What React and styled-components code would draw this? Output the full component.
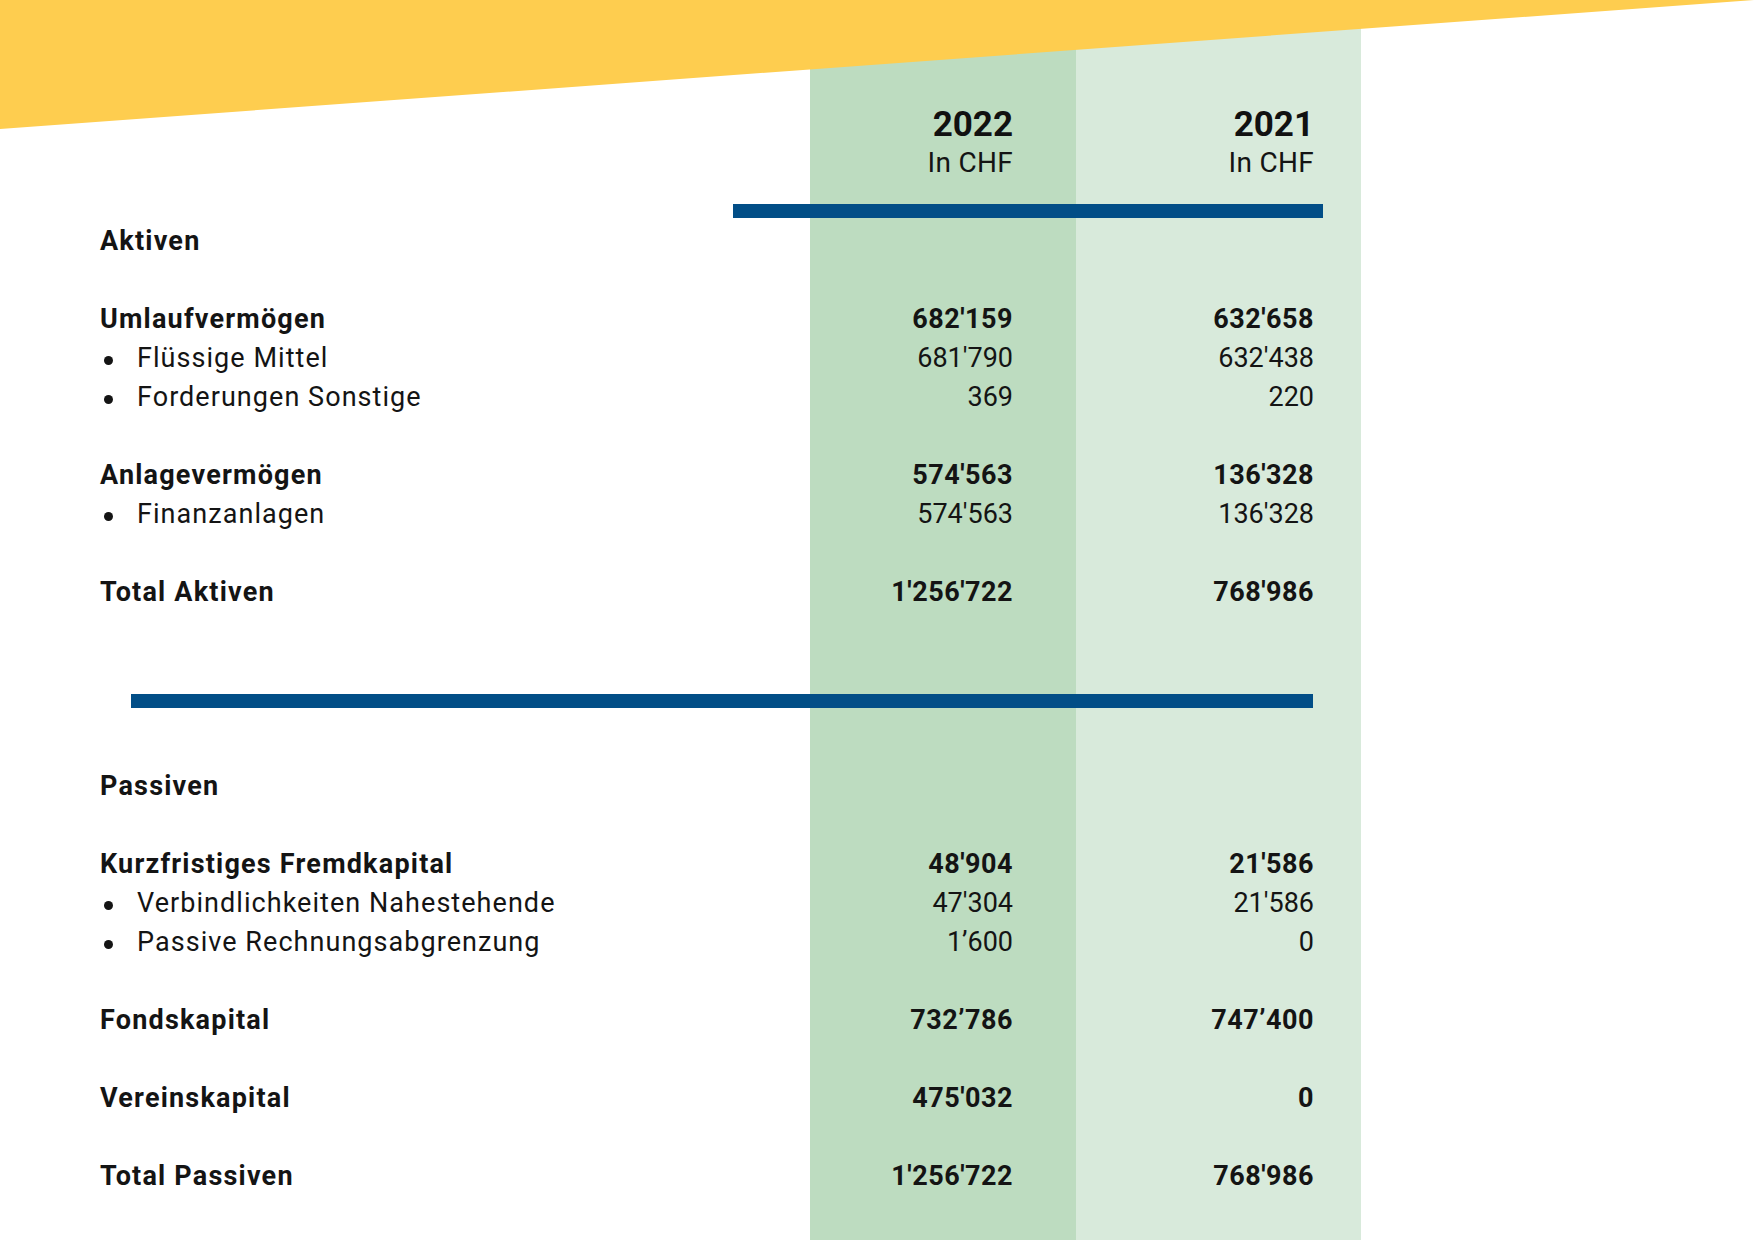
import styled, { createGlobalStyle } from 'styled-components';

const GlobalStyle = createGlobalStyle`
  html, body {
    margin: 0;
    padding: 0;
  }

  body {
    font-family: Roboto, "Liberation Sans", sans-serif;
    color: #141414;
    background: #fff;
  }
`;

const Page = styled.main`
  position: relative;
  width: 1754px;
  height: 1240px;
  overflow: hidden;
  background: linear-gradient(
    to right,
    #fff 0 810px,
    #bddcc0 810px 1076px,
    #d8eadb 1076px 1361px,
    #fff 1361px
  );
`;

const Banner = styled.div`
  position: absolute;
  top: 0;
  left: 0;
  width: 100%;
  height: 130px;
  background-color: #fecd4f;
  clip-path: polygon(0 0, 100% 0, 0 129px);
`;

const Sheet = styled.section`
  box-sizing: border-box;
  width: 1314px;
  padding: 105px 0 0 100px;
`;

const Grid = styled.div`
  display: grid;
  grid-template-columns: 1fr 200px 301px;
`;

const HeadCell = styled.div`
  text-align: right;
`;

const Year = styled.div`
  font-size: 35px;
  font-weight: 700;
  line-height: 40px;
  color: #111;
`;

const Unit = styled.div`
  font-size: 28px;
  font-weight: 400;
  line-height: 36px;
  letter-spacing: 0.3px;
`;

const Rule = styled.div`
  height: 14px;
  background-color: #024e87;
  width: ${props => props.$width}px;
  margin: ${props => props.$margin};
`;

const Block = styled.div`
  display: flex;
  flex-direction: column;
  gap: 39px;
`;

const Row = styled(Grid)`
  height: 39px;
  line-height: 39px;
  font-size: 27px;
  font-weight: ${props => (props.$strong ? 700 : 400)};
`;

const Label = styled.div`
  display: flex;
  align-items: center;
  white-space: nowrap;
  letter-spacing: ${props => (props.$strong ? '1.2px' : '1.05px')};
`;

const Dot = styled.span`
  width: 9px;
  height: 9px;
  margin: 4px 24px 0 4px;
  border-radius: 50%;
  background-color: #141414;
`;

const Value = styled.div`
  text-align: right;
  letter-spacing: ${props => (props.$strong ? '0.5px' : '0')};
`;

const aktiven = [
  {
    label: 'Umlaufvermögen',
    values: ["682'159", "632'658"],
    items: [
      ['Flüssige Mittel', "681'790", "632'438"],
      ['Forderungen Sonstige', '369', '220'],
    ],
  },
  {
    label: 'Anlagevermögen',
    values: ["574'563", "136'328"],
    items: [['Finanzanlagen', "574'563", "136'328"]],
  },
];

const passiven = [
  {
    label: 'Kurzfristiges Fremdkapital',
    values: ["48'904", "21'586"],
    items: [
      ['Verbindlichkeiten Nahestehende', "47'304", "21'586"],
      ['Passive Rechnungsabgrenzung', '1’600', '0'],
    ],
  },
  { label: 'Fondskapital', values: ['732’786', '747’400'], items: [] },
  { label: 'Vereinskapital', values: ["475'032", '0'], items: [] },
];

function Line({ label, values, strong, bullet }) {
  return (
    <Row $strong={strong}>
      <Label $strong={strong}>
        {bullet && <Dot />}
        {label}
      </Label>
      <Value $strong={strong}>{values[0]}</Value>
      <Value $strong={strong}>{values[1]}</Value>
    </Row>
  );
}

function Section({ title, groups, total }) {
  return (
    <Block>
      <Row $strong>
        <Label $strong>{title}</Label>
      </Row>
      {groups.map(group => (
        <div key={group.label}>
          <Line label={group.label} values={group.values} strong />
          {group.items.map(([label, a, b]) => (
            <Line key={label} label={label} values={[a, b]} bullet />
          ))}
        </div>
      ))}
      <Line label={total.label} values={total.values} strong />
    </Block>
  );
}

function App() {
  return (
    <Page>
      <GlobalStyle />
      <Sheet>
        <Grid>
          <div />
          <HeadCell>
            <Year>2022</Year>
            <Unit>In CHF</Unit>
          </HeadCell>
          <HeadCell>
            <Year>2021</Year>
            <Unit>In CHF</Unit>
          </HeadCell>
        </Grid>

        <Rule $width={590} $margin="23px 0 3.5px 633px" />

        <Section
          title="Aktiven"
          groups={aktiven}
          total={{ label: 'Total Aktiven', values: ["1'256'722", "768'986"] }}
        />

        <Rule $width={1182} $margin="82.5px 0 59px 31px" />

        <Section
          title="Passiven"
          groups={passiven}
          total={{ label: 'Total Passiven', values: ["1'256'722", "768'986"] }}
        />
      </Sheet>
      <Banner />
    </Page>
  );
}

export default App;
